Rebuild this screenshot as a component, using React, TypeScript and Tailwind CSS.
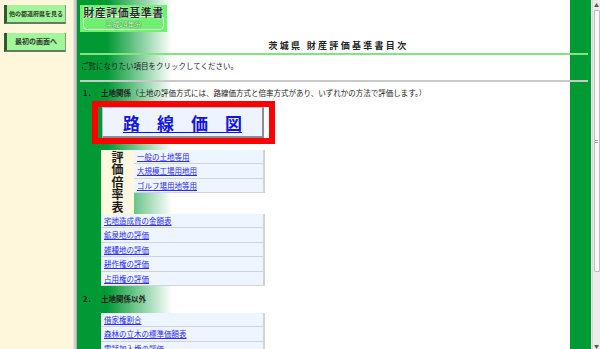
const rateLinks = ["一般の土地等用", "大規模工場用地用", "ゴルフ場用地等用"];
const landLinks = ["宅地造成費の金額表", "鉱泉地の評価", "雑種地の評価", "耕作権の評価", "占用権の評価"];
const otherLinks = ["借家権割合", "森林の立木の標準価額表", "電話加入権の評価"];

const LinkRow = ({ label, wide }: { label: string; wide?: boolean }) => (
  <div
    className={`h-[14.4px] ${wide ? "w-[164px]" : "w-[131px]"} bg-[#eef5ff] border-r-2 border-b border-[#cfd3da] flex items-center pl-[3px]`}
  >
    <span className="text-[7.5px] leading-none text-[#2a2aff] underline">{label}</span>
  </div>
);

const SideButton = ({ label, size }: { label: string; size: string }) => (
  <div className="w-[62px] h-[19px] bg-[#a3f59b] border-l-[3px] border-l-[#2e5a2e] border-b-2 border-b-[#5f7f5f] border-r border-r-[#7f9f7f] flex items-center justify-center">
    <span className={`${size} leading-none font-bold text-[#2b3b2b] whitespace-nowrap`}>{label}</span>
  </div>
);

export default function App() {
  return (
    <div className="w-[600px] h-[349px] flex overflow-hidden bg-white font-['Noto_Sans_CJK_JP',sans-serif] text-[#222]">
      {/* left frame */}
      <div className="w-[73px] h-full bg-[#fff7dc] pt-[5px] pl-[4px] flex flex-col gap-[9px]">
        <SideButton label="他の都道府県を見る" size="text-[6px]" />
        <SideButton label="最初の画面へ" size="text-[7px]" />
      </div>
      <div className="w-[4px] h-full bg-[#cfcfcf] border-l border-[#e8e8e8] border-r border-r-[#b0b0b0]" />

      {/* main frame */}
      <div className="w-[515px] h-full flex flex-col bg-[linear-gradient(to_right,transparent_493px,#009933_493px,#009933_514px,#e8f8e8_514px),linear-gradient(to_right,#009933_0px,#009933_30px,#ffffff_95px)]">
        <div className="relative ml-[3px] mt-[5px] w-[87px] h-[27px] shrink-0 bg-[#6ff06f] flex flex-col items-center">
          <div className="absolute left-[3px] right-[3px] top-[11px] bottom-[2px] rounded-[4px] border border-white/80" />
          <span className="relative mt-[1px] text-[11px] leading-[13px] font-bold text-[#1d331d] tracking-[0.5px] [text-shadow:0_0_2px_#fff,0_0_1px_#fff]">
            財産評価基準書
          </span>
          <span className="relative text-[7px] leading-[10px] text-[#e4ffe4] [text-shadow:0_0_1px_#2f8f2f,0_0_1px_#2f8f2f,0_0_1px_#2f8f2f]">
            平成24年分
          </span>
        </div>

        <div className="mt-[9px] pl-[8px] h-[10px] shrink-0 flex justify-center">
          <span className="text-[9px] leading-[10px] font-bold tracking-[2.3px] text-[#222]">茨城県 財産評価基準書目次</span>
        </div>
        <div className="mt-[2px] ml-[3px] mr-[4px] h-[2px] shrink-0 bg-[#7fe57f]" />

        <div className="mt-[6px] ml-[4px] h-[10px] shrink-0 text-[7.5px] leading-[10px]">ご覧になりたい項目をクリックしてください。</div>
        <div className="mt-[9px] ml-[3px] mr-[4px] h-[2px] shrink-0 bg-[#c8c8c8]" />

        <div className="mt-[6px] ml-[6px] h-[10px] shrink-0 text-[7.5px] leading-[10px] whitespace-nowrap">
          <span className="font-bold">1．</span>
          <span className="ml-[6px] font-bold">土地関係</span>
          （土地の評価方式には、路線価方式と倍率方式があり、いずれかの方法で評価します。）
        </div>

        <div className="mt-[3px] ml-[15px] w-[183px] h-[43px] shrink-0 border-[6px] border-[#ff0000] pl-[4px] pr-[5px]">
          <div className="w-full h-full bg-[#eef4ff] border border-[#b8bcc4] border-r-2 border-b-2 border-r-[#8a8e96] border-b-[#8a8e96] flex items-center justify-center">
            <span className="text-[17px] leading-none font-bold text-[#1414e0] underline underline-offset-2">路　線　価　図</span>
          </div>
        </div>

        <div className="mt-[6px] ml-[24px] flex shrink-0">
          <div className="w-[33px] h-[64px] shrink-0 bg-[#fff8e0] flex flex-col items-center justify-center">
            {["評", "価", "倍", "率", "表"].map((c) => (
              <span key={c} className="block w-[12px] h-[12.5px] text-[12px] leading-[12.5px] font-bold text-[#1a1a1a]">
                {c}
              </span>
            ))}
          </div>
          <div className="flex flex-col">
            {rateLinks.map((l) => (
              <LinkRow key={l} label={l} />
            ))}
          </div>
        </div>

        <div className="ml-[24px] flex flex-col shrink-0">
          {landLinks.map((l) => (
            <LinkRow key={l} label={l} wide />
          ))}
        </div>

        <div className="mt-[8px] ml-[6px] h-[10px] shrink-0 text-[7.5px] leading-[10px] whitespace-nowrap">
          <span className="font-bold">2．</span>
          <span className="ml-[6px] font-bold">土地関係以外</span>
        </div>

        <div className="mt-[9px] ml-[24px] flex flex-col shrink-0">
          {otherLinks.map((l) => (
            <LinkRow key={l} label={l} wide />
          ))}
        </div>
      </div>

      {/* scrollbar */}
      <div className="w-[8px] h-full bg-[#ececec] border-l border-[#d8d8d8] flex flex-col items-center">
        <div className="h-[8px] flex items-center justify-center text-[5px] leading-none text-[#555]">▲</div>
        <div className="mt-[2px] w-[6px] h-[262px] bg-[#f8f8f8] border border-[#bdbdbd] rounded-[1px] flex items-center justify-center">
          <div className="w-[3px] h-[3px] border-y border-[#999]" />
        </div>
        <div className="flex-1" />
        <div className="h-[8px] flex items-center justify-center text-[5px] leading-none text-[#555]">▼</div>
      </div>
    </div>
  );
}
